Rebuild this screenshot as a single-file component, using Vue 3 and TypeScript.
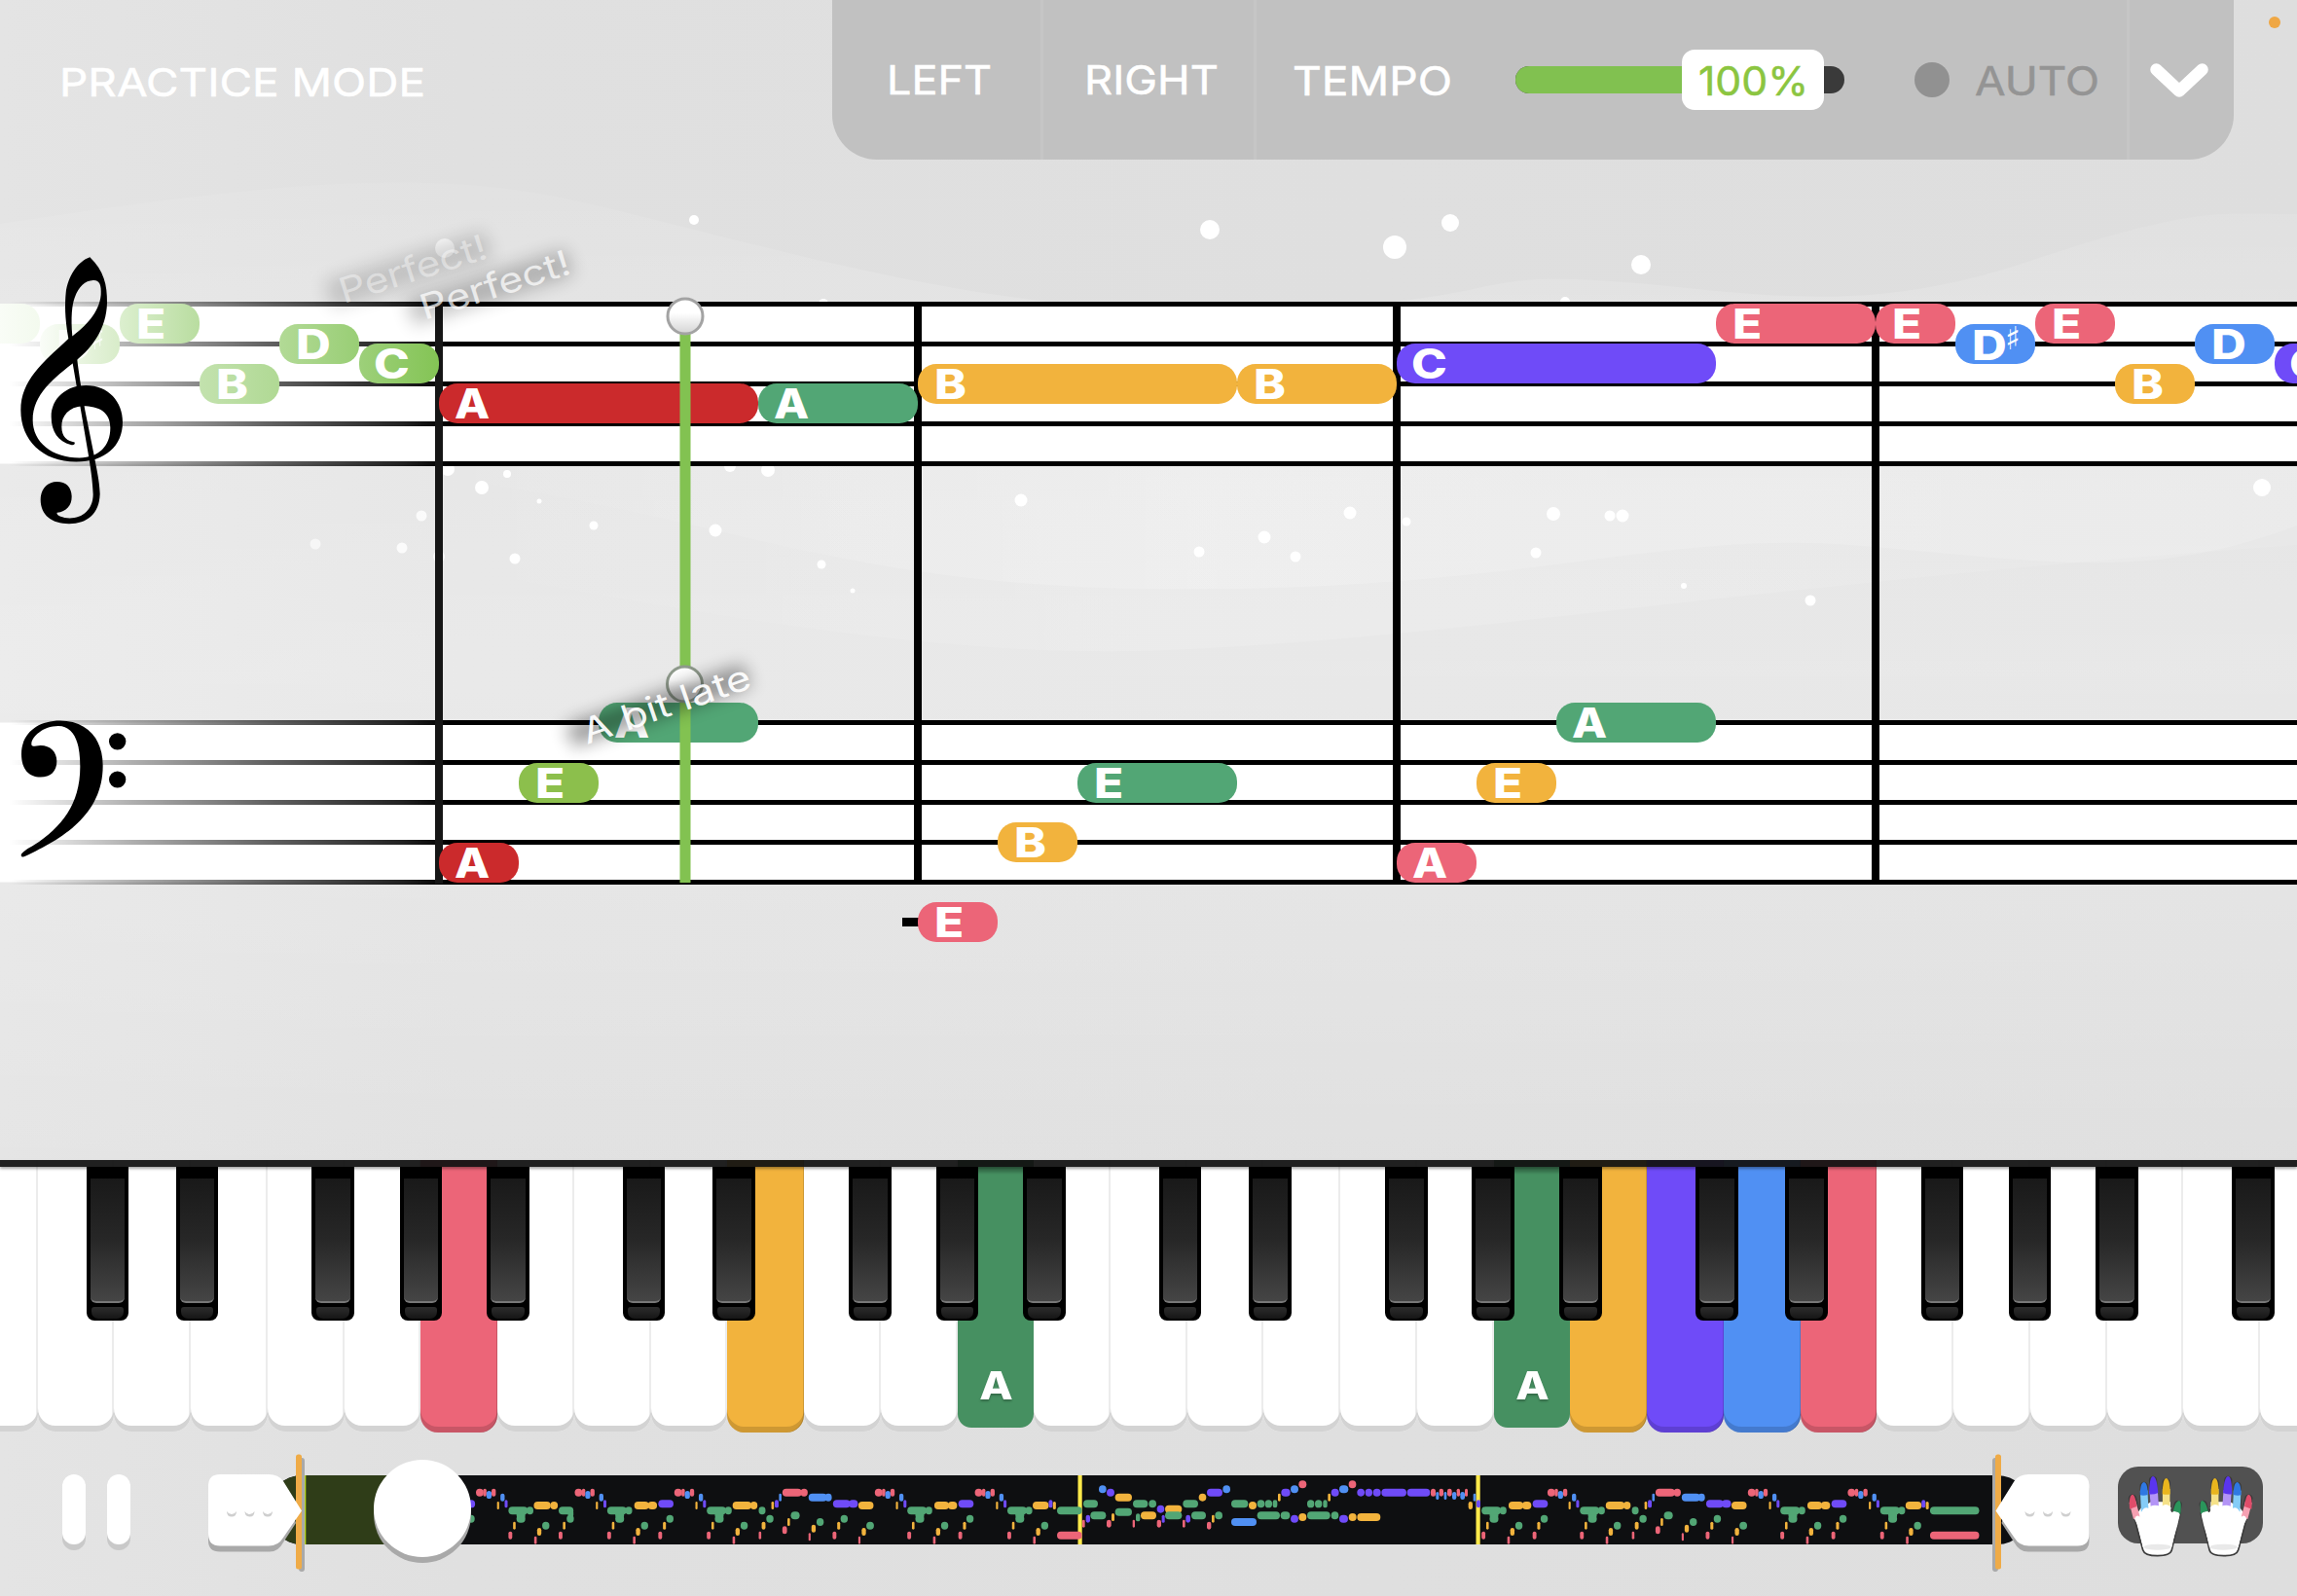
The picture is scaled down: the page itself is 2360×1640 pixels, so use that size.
<script setup lang="ts">
type Note = { x: number; w: number; y: number; c: string; t?: string; sharp?: boolean; fade?: number }

const RED = '#cb2a2c'
const PINK = '#ec6578'
const GREEN = '#52a675'
const ORANGE = '#f2b33d'
const PURPLE = '#6f4bf8'
const BLUE = '#5090f3'

const notes: Note[] = [
  { x: -41, w: 82, y: 312, c: 'url(#past0)' },
  { x: 41, w: 82, y: 333, c: 'url(#past1)', t: 'D', sharp: true, fade: 0.8 },
  { x: 123, w: 82, y: 312, c: 'url(#past2)', t: 'E' },
  { x: 205, w: 82, y: 374, c: 'url(#past3)', t: 'B' },
  { x: 287, w: 82, y: 333, c: 'url(#past4)', t: 'D' },
  { x: 369, w: 82, y: 353, c: 'url(#past5)', t: 'C' },
  { x: 451, w: 328, y: 394, c: RED, t: 'A' },
  { x: 779, w: 164, y: 394, c: GREEN, t: 'A' },
  { x: 943, w: 328, y: 374, c: ORANGE, t: 'B' },
  { x: 1271, w: 164, y: 374, c: ORANGE, t: 'B' },
  { x: 1435, w: 328, y: 353, c: PURPLE, t: 'C' },
  { x: 1763, w: 164, y: 312, c: PINK, t: 'E' },
  { x: 1927, w: 82, y: 312, c: PINK, t: 'E' },
  { x: 2009, w: 82, y: 333, c: BLUE, t: 'D', sharp: true },
  { x: 2091, w: 82, y: 312, c: PINK, t: 'E' },
  { x: 2173, w: 82, y: 374, c: ORANGE, t: 'B' },
  { x: 2255, w: 82, y: 333, c: BLUE, t: 'D' },
  { x: 2337, w: 82, y: 353, c: PURPLE, t: 'C' },
  { x: 451, w: 82, y: 866, c: RED, t: 'A' },
  { x: 533, w: 82, y: 784, c: '#8cbf4c', t: 'E' },
  { x: 615, w: 164, y: 722, c: GREEN, t: 'A' },
  { x: 943, w: 82, y: 927, c: PINK, t: 'E' },
  { x: 1025, w: 82, y: 845, c: ORANGE, t: 'B' },
  { x: 1107, w: 164, y: 784, c: GREEN, t: 'E' },
  { x: 1435, w: 82, y: 866, c: PINK, t: 'A' },
  { x: 1517, w: 82, y: 784, c: ORANGE, t: 'E' },
  { x: 1599, w: 164, y: 722, c: GREEN, t: 'A' },
]

const pastStops = [
  ['#ffffff', '#f3faee'],
  ['#fafdf8', '#d8ecc9'],
  ['#dcefcf', '#b9dda0'],
  ['#c3e2ae', '#b0d994'],
  ['#b2da96', '#99ce75'],
  ['#9dd07a', '#84c455'],
]

const staffs = [312.5, 742.5]
const barlines = [451, 943, 1435, 1927]

const snow: [number, number, number, number?][] = [
  [713, 226, 5], [1243, 236, 10], [1490, 229, 9], [1433, 254, 12], [1686, 272, 10], [457, 255, 10, 0.8],
  [495, 501, 7], [521, 487, 4], [433, 530, 5.5, 0.8], [554, 515, 2.5], [610, 540, 4.5], [324, 559, 5.5, 0.6],
  [413, 563, 5.5, 0.8], [451, 572, 6, 0.8], [529, 574, 5.5], [735, 545, 6.5], [789, 483, 7], [750, 479, 6], [460, 482, 7],
  [844, 580, 4.5], [876, 607, 2.5], [1049, 514, 6.5], [1232, 567, 5.5], [1299, 552, 6.5], [1331, 572, 5.5],
  [1387, 527, 6.5], [1445, 536, 4.5], [1596, 528, 7], [1578, 568, 5.5], [1654, 530, 5.5], [1667, 530, 6.5],
  [1730, 602, 3], [1860, 617, 5.5], [2324, 501, 9], [1608, 310, 5], [846, 312, 5],
]

// keyboard
const keyFill: Record<number, string> = { 6: PINK, 10: ORANGE, 13: '#469061', 20: '#469061', 21: ORANGE, 22: PURPLE, 23: BLUE, 24: PINK }
const whiteKeys = Array.from({ length: 31 }, (_, i) => ({ fill: keyFill[i] ?? '', pressed: i === 13 || i === 20 }))
const blackKeys = [88.8, 180.6, 320.4, 410.7, 500, 639.8, 732, 872, 961.7, 1051, 1190.8, 1283, 1423, 1512, 1602, 1742, 1834, 1973.8, 2063.6, 2153, 2293]

// overview strip: every item reads colour, start, end, centre y
type Mini = { x: number; w: number; y: number; c: string }
const palette: Record<string, string> = { p: PINK, g: GREEN, o: ORANGE, v: PURPLE, b: BLUE }
const minis: Mini[] = []
function put(origin: number, scale: number, text: string) {
  for (const item of text.trim().split(/\s+/)) {
    const [c, a, b, y] = item.split(',')
    minis.push({ x: origin + +a / scale, w: Math.max(1.8, (+b - +a) / scale), y: +y / 3 - 16, c: palette[c] })
  }
}
const head = 'p,0,18,101 p,17,25,101 b,25,37,108 p,37,47,101 o,50,55,141 b,58,68,116 v,68,75,136'
const body =
  'g,77,123,157 g,120,136,157 g,96,117,170 g,96,117,182 p,77,86,233 o,88,94,203 p,138,144,248 o,145,155,222 g,157,174,203'
const tails: Record<string, string> = {
  g: 'o,137,177,141 o,176,194,141 g,196,231,157 g,218,231,166 p,196,205,233 o,206,212,203 g,215,232,182',
  v: 'o,141,176,141 o,173,195,141 v,198,234,136 p,198,207,233 o,209,216,203 g,217,234,182',
  l:
    'o,138,183,141 o,180,197,141 g,200,216,157 o,230,236,141 v,238,247,136 b,248,254,116 p,256,302,101 p,299,316,101 b,318,362,116 b,357,373,116 v,376,417,136 v,413,435,136 o,436,472,141 ' +
    'p,200,206,233 o,207,216,203 g,218,235,182 p,256,267,217 o,268,274,192 g,276,297,172 p,318,323,238 o,325,335,212 g,337,354,192 p,375,384,233 o,386,393,203 g,394,411,182 p,436,441,248 o,444,454,222 g,455,473,203',
  e: 'o,137,175,141 v,175,184,136 o,185,192,141',
}
function motif(origin: number, tail: string, withHead = true) {
  if (withHead) put(origin, 2.306, head)
  put(origin, 2.306, body + ' ' + tails[tail])
}
put(440, 2.306, 'v,93,111,136 g,93,110,182')
motif(489, 'g')
motif(590.5, 'v')
motif(692.8, 'l')
motif(898.8, 'v')
motif(1001.6, 'e')
motif(1488.8, 'v', false)
motif(1589.9, 'l')
motif(1795.8, 'v')
motif(1898.4, 'e')
put(1500, 2.613, 'g,1262,1394,157 p,1262,1394,233')
put(
  1080,
  3,
  `g,18,95,157 p,18,95,233 g,99,144,136 b,147,170,91 v,171,195,101 o,197,249,116 g,252,298,136 g,301,324,136 v,326,349,152 o,351,403,152
  g,351,403,172 g,406,453,136 o,455,478,116 v,480,528,101 b,529,552,91 p,96,104,197 v,107,120,182 g,121,169,172 p,171,185,197 o,186,195,177
  g,197,249,161 p,251,258,197 g,261,274,178 o,276,324,172 p,326,339,197 v,341,350,182 p,405,413,197 v,415,429,182 g,432,477,172 p,480,493,203
  o,495,503,182 g,505,528,172 g,555,607,136 o,609,633,141 g,635,658,136 g,659,681,136 g,683,697,136 o,699,707,116 v,709,737,101 b,738,762,91
  p,763,787,76 g,789,811,136 g,813,835,136 g,838,851,136 o,853,861,116 v,863,887,101 b,888,916,91 p,917,940,76 b,555,633,192 g,635,705,172
  g,707,736,172 v,738,762,182 o,763,787,177 g,789,860,172 g,863,886,172 v,888,915,182 o,917,941,177 o,943,1015,177 v,943,966,101
  v,968,990,101 v,992,1016,101 v,1018,1095,101 v,1097,1168,101 p,1170,1185,101 b,1186,1195,111 p,1196,1209,101 b,1211,1219,111
  p,1221,1235,101 b,1236,1249,111 p,1250,1260,101 b,1261,1275,111 p,1275,1284,101 o,1286,1299,141 b,1301,1309,116 v,1311,1323,136`,
)
</script>

<template>
  <div class="app">
    <svg class="backdrop" viewBox="0 0 2360 1640" aria-hidden="true">
      <defs>
        <linearGradient id="bg" x1="0" x2="1" y1="0" y2="0">
          <stop offset="0" stop-color="#e4e4e4" />
          <stop offset="0.2" stop-color="#e0e0e0" />
          <stop offset="1" stop-color="#dedede" />
        </linearGradient>
        <linearGradient id="wave" x1="0" x2="0" y1="0" y2="1">
          <stop offset="0" stop-color="#fff" stop-opacity="0.06" />
          <stop offset="0.2" stop-color="#fff" stop-opacity="0.2" />
          <stop offset="0.5" stop-color="#fff" stop-opacity="0.3" />
          <stop offset="1" stop-color="#fff" stop-opacity="0.05" />
        </linearGradient>
        <linearGradient id="side" x1="0" x2="1" y1="0" y2="0">
          <stop offset="0.05" stop-color="#fff" stop-opacity="0" />
          <stop offset="0.45" stop-color="#fff" stop-opacity="0.2" />
          <stop offset="1" stop-color="#fff" stop-opacity="0.12" />
        </linearGradient>
      </defs>
      <rect width="2360" height="1640" fill="url(#bg)" />
      <path d="M0 230C200 200 400 170 560 200S1000 330 1280 320 1500 280 1640 288 1900 330 2080 270 2280 220 2360 220V1190H0Z" fill="url(#wave)" />
      <path d="M300 478C700 500 800 600 1180 605S1700 545 1900 560 2200 600 2360 540V478Z" fill="url(#side)" />
      <path d="M300 560C600 600 900 680 1200 668S1800 600 2360 560V478H300Z" fill="url(#side)" opacity="0.7" />
      <circle v-for="(s, i) in snow" :key="i" :cx="s[0]" :cy="s[1]" :r="s[2]" fill="#fff" :opacity="s[3] ?? 1" />
    </svg>

    <header class="top">
      <svg class="title" width="380" height="50"><text x="0" y="39" font-size="40" textLength="376" lengthAdjust="spacingAndGlyphs">PRACTICE MODE</text></svg>
      <nav class="panel">
        <div class="cell left"><svg width="108" height="50"><text x="0" y="39.5" font-size="41" textLength="108" lengthAdjust="spacingAndGlyphs">LEFT</text></svg></div>
        <div class="cell right"><svg width="140" height="50"><text x="0" y="39.5" font-size="41" textLength="138" lengthAdjust="spacingAndGlyphs">RIGHT</text></svg></div>
        <div class="cell tempo">
          <svg width="164" height="50"><text x="0" y="40.5" font-size="41" textLength="164" lengthAdjust="spacingAndGlyphs">TEMPO</text></svg>
          <div class="slider">
            <div class="fill"></div>
            <div class="value"><svg width="114" height="50"><text class="pct" x="0" y="40.5" font-size="41" textLength="113" lengthAdjust="spacingAndGlyphs">100%</text></svg></div>
          </div>
          <div class="dot"></div>
          <svg width="130" height="50"><text class="auto" x="0" y="40.5" font-size="41" textLength="128" lengthAdjust="spacingAndGlyphs">AUTO</text></svg>
        </div>
        <div class="cell more">
          <svg width="64" height="40" viewBox="0 0 64 40"><path d="M8.5 9.500L32 31.500L55.500 9.500" fill="none" stroke="#fff" stroke-width="12.500" stroke-linecap="round" stroke-linejoin="round" /></svg>
        </div>
      </nav>
      <i class="mic"></i>
    </header>

    <main class="score">
      <svg width="2360" height="1028" viewBox="0 164 2360 1028">
        <defs>
          <linearGradient id="line" gradientUnits="userSpaceOnUse" x1="0" x2="460" y1="0" y2="0">
            <stop offset="0.02" stop-color="#000" stop-opacity="0" />
            <stop offset="0.3" stop-color="#000" stop-opacity="0.32" />
            <stop offset="0.6" stop-color="#000" stop-opacity="0.62" />
            <stop offset="0.9" stop-color="#000" stop-opacity="0.87" />
            <stop offset="1" stop-color="#000" />
          </linearGradient>
          <linearGradient v-for="(p, i) in pastStops" :id="'past' + i" :key="i">
            <stop offset="0" :stop-color="p[0]" />
            <stop offset="1" :stop-color="p[1]" />
          </linearGradient>
          <linearGradient id="ball" x1="0" x2="0" y1="0" y2="1">
            <stop offset="0.4" stop-color="#fff" />
            <stop offset="1" stop-color="#d4d4d4" />
          </linearGradient>
          <filter id="soft" x="-30%" y="-100%" width="160%" height="300%"><feGaussianBlur stdDeviation="9" /></filter>
        </defs>

        <g v-for="s in staffs" :key="s">
          <rect x="0" :y="s" width="2360" height="164" fill="#fff" />
          <rect v-for="n in 5" :key="n" x="0" :y="s - 2.5 + (n - 1) * 41" width="2360" height="5" fill="url(#line)" />
        </g>
        <rect v-for="b in barlines" :key="b" :x="b - 4" y="310" width="8" height="598" :fill="b === 451 ? '#161616' : '#000'" />
        <rect x="927" y="943" width="20" height="9" />

        <g v-for="(n, i) in notes" :key="i">
          <rect :x="n.x" :y="n.y" :width="n.w" height="41" rx="19" :fill="n.c" />
          <g v-if="n.t" fill="#fff" :opacity="n.fade ?? 1">
            <text class="letter" :transform="`translate(${n.x + (n.t === 'A' ? 16 : n.t === 'C' ? 15 : 17)} ${n.y + (n.sharp ? 37 : 35.500)}) scale(${n.t === 'A' ? 1.120 : 1.180} 1)`">{{ n.t }}</text>
            <text v-if="n.sharp" class="sharp" :x="n.x + 51" :y="n.y + 26">♯</text>
          </g>
        </g>

        <g transform="translate(0 250) scale(0.33333 0.40816)">
          <path fill-rule="evenodd" d="M277 35C320 68 331 105 330 150C328 215 285 262 235 295C165 340 101 380 101 445C101 500 160 540 245 540C305 540 340 510 340 465C340 425 305 410 255 410C212 412 189 435 190 462C190 488 208 498 230 501C232 506 227 509 218 507C180 500 158 475 158 437C158 390 205 358 265 358C335 358 378 400 378 450C378 510 325 550 235 550C130 550 64 495 64 420C64 345 130 302 211 240C199 185 200 150 203 125C208 85 240 45 277 35ZM287 93C307 92 313 105 311 130C306 175 262 210 223 234C218 185 222 155 230 137C243 108 262 94 287 93Z" />
          <path d="M222 293L237 286C243 330 252 370 262 420L289 530C298 570 306 595 308 630C307 680 270 706 213 706C160 706 125 685 125 645C125 620 145 600 175 600C205 600 221 615 221 638C221 660 205 675 176 678C172 684 190 691 215 692C255 692 287 670 287 632C285 595 279 565 272 530L247 410C238 370 230 330 222 293Z" />
          <path d="M65 1540C68 1533 85 1524 105 1515C190 1470 247 1412 247 1318C247 1250 225 1216 180 1215C130 1215 95 1245 97 1262C98 1270 110 1264 125 1264C155 1264 175 1280 175 1304C175 1330 155 1344 125 1344C90 1344 66 1325 66 1285C66 1235 115 1202 185 1202C265 1202 317 1245 317 1315C317 1440 190 1500 78 1543C72 1546 65 1546 65 1540Z" />
          <ellipse cx="362" cy="1254" rx="26" ry="21" />
          <ellipse cx="362" cy="1350" rx="26" ry="21" />
        </g>

        <rect x="698.500" y="325" width="11" height="582" fill="#82c251" />
        <circle cx="704" cy="325" r="18" fill="url(#ball)" stroke="#a3a3a3" stroke-width="3" />
        <circle cx="703.500" cy="703" r="18" fill="url(#ball)" stroke="#8f9a8c" stroke-width="3" />

        <g transform="translate(353 312) rotate(-17.500)">
          <rect x="-12" y="-28" width="172" height="30" opacity="0.15" filter="url(#soft)" />
          <text class="praise" fill="#fff" fill-opacity="0.42" x="0" y="0" textLength="157" lengthAdjust="spacingAndGlyphs">Perfect!</text>
        </g>
        <g transform="translate(436 329) rotate(-17.500)">
          <rect x="-12" y="-26" width="172" height="28" opacity="0.22" filter="url(#soft)" />
          <text class="praise" fill="#fff" fill-opacity="0.72" x="0" y="0" textLength="160" lengthAdjust="spacingAndGlyphs">Perfect!</text>
        </g>
        <g transform="translate(603 765) rotate(-19)">
          <rect x="-14" y="-26" width="192" height="24" opacity="0.38" filter="url(#soft)" />
          <text class="praise" fill="#fff" fill-opacity="0.95" x="0" y="0" textLength="181" lengthAdjust="spacingAndGlyphs">A bit late</text>
        </g>
      </svg>
    </main>

    <section class="keyboard">
      <div class="whites">
        <div v-for="(k, i) in whiteKeys" :key="i" class="white" :class="{ lit: k.fill, pressed: k.pressed }" :style="k.fill ? { backgroundColor: k.fill } : {}">
          <span v-if="k.pressed">A</span>
        </div>
      </div>
      <div class="rail"></div>
      <div v-for="b in blackKeys" :key="b" class="black" :style="{ left: b + 'px' }"><i></i><b></b></div>
    </section>

    <footer class="controls">
      <div class="pause"><i></i><i></i></div>
      <svg class="timeline" width="1952" height="150" viewBox="204 1480 1952 150">
        <rect x="276" y="1516" width="1810" height="71" rx="34" fill="#0e0f11" />
        <path d="M434 1516H310A34 35.500 0 0 0 310 1587H434Z" fill="#2f3d18" />
        <g transform="translate(0 1516)">
          <rect x="1107.500" y="0" width="4.200" height="71" fill="#ffea4a" />
          <rect x="1516.500" y="0" width="4.200" height="71" fill="#ffea4a" />
          <rect v-for="(m, i) in minis" :key="i" :x="m.x" :y="Math.min(m.y - 4, 63)" :width="m.w" height="8" :rx="Math.min(4, m.w / 2)" :fill="m.c" />
        </g>
        <rect x="312.500" y="1516" width="1.800" height="71" fill="#b8d422" />

        <rect x="307" y="1498" width="6" height="117" rx="3" fill="#a9a9a9" />
        <rect x="2047" y="1498" width="6" height="117" rx="3" fill="#a9a9a9" />
        <rect x="304" y="1494.500" width="6" height="118" rx="2.500" fill="#efab47" />
        <rect x="2050" y="1494.500" width="6" height="118" rx="2.500" fill="#efab47" />

        <g v-for="side in 2" :key="side" :transform="side === 2 ? 'translate(2360.500 0) scale(-1 1)' : ''">
          <path d="M226 1521H278Q287 1521 291 1528L304 1565 291 1585Q286 1594.500 277 1594.500H226Q214 1594.500 214 1583V1533Q214 1521 226 1521Z" fill="#a9a9a9" />
          <path d="M226 1515H276Q286 1515 291 1522L310 1552.500 291 1580Q286 1588.500 276 1588.500H226Q214 1588.500 214 1576V1527Q214 1515 226 1515Z" fill="#fff" />
          <path d="M233 1553Q233 1558.500 238 1558.500T243 1553Q241 1556 238 1556T233 1553ZM251.500 1553Q251.500 1558.500 256.500 1558.500T261.500 1553Q259.500 1556 256.500 1556T251.500 1553ZM270 1553Q270 1558.500 275 1558.500T280 1553Q278 1556 275 1556T270 1553Z" fill="#cfcfcf" />
        </g>
        <circle cx="434" cy="1556" r="50" fill="#a9a9a9" />
        <circle cx="434" cy="1550" r="50" fill="#fff" />
      </svg>
      <button class="hands" type="button" aria-label="Hands">
        <svg width="150" height="100" viewBox="0 0 450 300">
          <g v-for="h in 2" :key="h" :transform="h === 1 ? 'translate(-48 -51)' : 'translate(496 -51) scale(-1 1)'" stroke-linecap="round" stroke-linejoin="round">
            <g stroke="#3a3a3a" stroke-width="25" fill="none">
              <path d="M93 149L106 205M128 111V190M156 93L162 185M197 100V180M233 168L224 210" />
            </g>
            <path d="M96 198L125 308Q130 326 170 326T214 308L241 194 215 190 205 165H185L170 165 120 185Z" fill="#fff" stroke="#3b3b3b" stroke-width="5" />
            <path d="M104 200L125 300H214L234 200 210 190V160H150L120 178Z" fill="#fff" />
            <g fill="none" stroke-width="21" stroke-linecap="butt">
              <path d="M93 160L106 210" stroke="#f6a0b2" />
              <path d="M128 125L131 190" stroke="#84ccf7" stroke-width="23" />
              <path d="M158 125L162 180" stroke="#b394f6" stroke-width="25" />
              <path d="M197 120V180" stroke="#f5e188" stroke-width="23" />
              <path d="M225 210L228 190" stroke="#fff" />
            </g>
            <path d="M99 212Q106 196 115 206Q125 170 143 180Q153 164 182 175Q198 160 212 178L208 197Q224 184 239 199L232 230 213 295H125L108 230Z" fill="#fff" />
            <path d="M84 182Q81 137 94 137Q102 140 106 174Q96 178 84 182Z" fill="#e04d6a" />
            <path d="M116 139Q117 98 129 99Q140 102 140 138Q128 142 116 139Z" fill="#2f78e2" />
            <path d="M144 136Q145 81 156 81Q168 81 172 132Q158 138 144 136Z" fill="#5a35ee" />
            <path d="M185 136Q186 87 197 87Q209 89 209 136Q198 139 185 136Z" fill="#e9b51e" />
            <path d="M218 190Q225 156 237 156Q245 157 241 197Q229 187 218 190Z" fill="#2a955b" />
            <ellipse cx="170" cy="299" rx="42" ry="9" fill="#e9e9e9" />
          </g>
        </svg>
      </button>
    </footer>
  </div>
</template>

<style>
body {
  margin: 0;
  background: #e0e0e0;
}
</style>

<style scoped>
.app {
  position: relative;
  width: 2360px;
  height: 1640px;
  overflow: hidden;
  display: flex;
  flex-direction: column;
  font-family: Inter, 'Liberation Sans', sans-serif;
}
svg {
  display: block;
  flex: none;
}
.backdrop {
  position: absolute;
  inset: 0;
  width: 2360px;
  height: 1640px;
}
.top,
.score,
.keyboard,
.controls {
  position: relative;
  flex: none;
}
.top {
  height: 164px;
  display: flex;
  align-items: flex-start;
}
.top text {
  fill: #fff;
  stroke: #fff;
  stroke-width: 0.5px;
  font-weight: 400;
}
.title {
  margin: 60px 0 0 61px;
}
.panel {
  width: 1440px;
  height: 164px;
  margin-left: 414px;
  background: #c1c1c1;
  border-radius: 0 0 46px 46px;
  display: flex;
}
.cell {
  box-sizing: border-box;
  height: 164px;
  padding-top: 57px;
  display: flex;
  align-items: flex-start;
}
.cell + .cell {
  border-left: 3px solid #c6c6c6;
}
.left {
  width: 214px;
  padding-left: 56px;
}
.right {
  width: 219px;
  padding-left: 42px;
}
.tempo {
  width: 897px;
  padding-left: 37px;
}
.more {
  width: 110px;
  padding: 62px 0 0 19px;
}
.slider {
  width: 338px;
  height: 28px;
  margin: 11px 0 0 65px;
  border-radius: 14px;
  background: #3a3a3a;
  position: relative;
}
.fill {
  width: 250px;
  height: 28px;
  border-radius: 14px;
  background: #81c150;
}
.value {
  position: absolute;
  left: 171px;
  top: -17px;
  width: 146px;
  height: 62px;
  border-radius: 13px;
  background: #fff;
}
.value svg {
  margin: 6px 0 0 17px;
}
.top .pct {
  fill: #8bc540;
  stroke: #8bc540;
}
.dot {
  width: 36px;
  height: 36px;
  margin: 7px 0 0 72px;
  border-radius: 50%;
  background: #919191;
}
.dot + svg {
  margin-left: 26px;
}
.top .auto {
  fill: #949494;
  stroke: #949494;
}
.mic {
  width: 12px;
  height: 12px;
  margin: 17px 0 0 36px;
  border-radius: 50%;
  background: #efa744;
}
.score {
  height: 1028px;
}
.letter {
  font-size: 42px;
  font-weight: 800;
}
.sharp {
  font-family: 'DejaVu Sans', sans-serif;
  font-size: 33px;
}
.praise {
  font-size: 36px;
  font-weight: 400;
}
.keyboard {
  height: 288px;
}
.rail {
  position: absolute;
  left: 0;
  top: 0;
  width: 100%;
  height: 7px;
  background: rgba(18, 18, 18, 0.94);
  box-shadow: 0 2px 3px rgba(0, 0, 0, 0.35);
}
.whites {
  display: flex;
  margin-left: -40px;
}
.white {
  box-sizing: border-box;
  flex: none;
  width: 78.74px;
  height: 279px;
  border-radius: 0 0 18px 18px;
  background: #fff;
  box-shadow: inset 0 -6px 0 #d3d3d3, inset -2px 0 0 #ececec;
  display: flex;
  justify-content: center;
}
.white.lit {
  height: 280px;
  box-shadow: inset 0 -6px 0 rgba(0, 0, 0, 0.15), inset -1px 0 0 rgba(0, 0, 0, 0.15);
}
.white.pressed {
  height: 275px;
  border-radius: 0 0 14px 14px;
  box-shadow: inset 0 16px 3px -3px rgba(0, 0, 0, 0.2);
}
.white span {
  margin-top: 207px;
  color: #fff;
  font-size: 40px;
  font-weight: 800;
  line-height: 50px;
  transform: scaleX(1.12);
  text-shadow: 0 2px 2px rgba(0, 0, 0, 0.25);
}
.black {
  position: absolute;
  top: 7px;
  width: 43.5px;
  height: 158px;
  border-radius: 0 0 8px 8px;
  background: #000;
}
.black i {
  position: absolute;
  left: 4px;
  right: 4px;
  top: 12px;
  height: 128px;
  border-radius: 0 0 6px 6px;
  background: linear-gradient(#191919, #272727 50%, #454545);
  border-bottom: 2px solid #777;
  box-sizing: border-box;
}
.black b {
  position: absolute;
  left: 5px;
  right: 5px;
  top: 144px;
  height: 12px;
  border-radius: 3px 3px 7px 7px;
  background: linear-gradient(#2c2c2c, #161616);
}
.controls {
  height: 160px;
  display: flex;
  align-items: flex-start;
}
.pause {
  display: flex;
  gap: 22px;
  margin: 35px 0 0 64px;
}
.pause i {
  width: 24px;
  height: 72px;
  border-radius: 12px;
  background: #fff;
  box-shadow: 0 6px 0 #c9c9c9;
}
.timeline {
  margin-left: 70px;
}
.hands {
  margin: 27px 0 0 20px;
  width: 149px;
  height: 79px;
  padding: 0;
  border: 0;
  border-radius: 21px;
  background: #515151;
}
.hands svg {
  overflow: visible;
}
</style>
